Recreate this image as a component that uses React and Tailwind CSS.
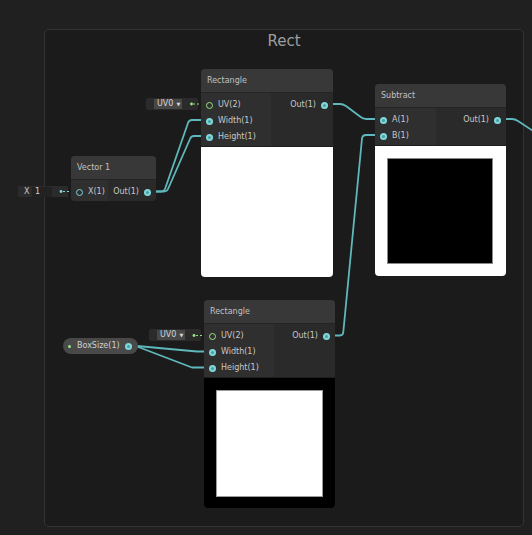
import React from 'react';

const font = { fontFamily: '"DejaVu Sans", Verdana, sans-serif' };

function PortDot({ hollow, green }) {
  if (hollow) {
    return (
      <span
        className={
          'w-[7px] h-[7px] rounded-full border-[1.5px] shrink-0 ' +
          (green ? 'border-[#96e383]' : 'border-[#7fd6d8]')
        }
      />
    );
  }
  return (
    <span className="w-[7px] h-[7px] rounded-full bg-[#80d8da] shrink-0 flex items-center justify-center">
      <span className="w-[3px] h-[3px] rounded-full bg-[#4a9ea1]" />
    </span>
  );
}

function Node({ x, y, w, inputW, title, inputs, outputs, preview, rows }) {
  return (
    <div
      className="absolute rounded-[4px] overflow-hidden bg-[#2a2a2a] flex flex-col"
      style={{ left: x, top: y, width: w }}
    >
      <div className="h-[24px] bg-[#383838] border-b border-[#242424] flex items-center pl-[6px] text-[8px] text-[#c2c2c2]">
        {title}
      </div>
      <div className="flex">
        <div className="bg-[#2f2f2f] pt-[4px] pb-[1px] flex flex-col" style={{ width: inputW }}>
          {inputs.map((p) => (
            <div key={p.label} className="h-[16px] flex items-center gap-[5px] pl-[5px] text-[8px] text-[#c8c8c8]">
              <PortDot hollow={p.hollow} green={p.green} />
              <span>{p.label}</span>
            </div>
          ))}
        </div>
        <div className="flex-1 bg-[#2a2a2a] pt-[4px] pb-[1px] flex flex-col items-end" style={{ minHeight: rows * 16 + 5 }}>
          {outputs.map((p) => (
            <div key={p.label} className="h-[16px] flex items-center gap-[5px] pr-[5px] text-[8px] text-[#c8c8c8]">
              <span>{p.label}</span>
              <PortDot />
            </div>
          ))}
        </div>
      </div>
      {preview}
    </div>
  );
}

function UvControl({ x, y }) {
  return (
    <div
      className="absolute h-[12px] w-[52px] bg-[#2b2b2b] rounded-[2px] flex items-center pl-[8px]"
      style={{ left: x, top: y }}
    >
      <div className="h-[10px] w-[28px] bg-[#474747] flex items-center gap-[3px] pl-[3px] text-[8px] leading-none text-[#d6d6d6]">
        <span>UV0</span>
        <span className="text-[5px]">▼</span>
      </div>
    </div>
  );
}

export default function App() {
  return (
    <div className="relative w-[532px] h-[535px] bg-[#202020] overflow-hidden" style={font}>
      {/* group */}
      <div className="absolute left-[44px] top-[29px] w-[480px] h-[498px] bg-[#1b1b1b] border border-[#333333] rounded-[5px] flex justify-center">
        <div className="pt-[1px] text-[15px] leading-[20px] text-[#9d9d9d]">Rect</div>
      </div>

      {/* inline controls */}
      <UvControl x={146} y={98} />
      <UvControl x={149} y={329} />
      <div className="absolute left-[18px] top-[186px] w-[50px] h-[11px] bg-[#2b2b2b] flex items-center text-[8px] text-[#c8c8c8]">
        <span className="pl-[6px] w-[14px]">X</span>
        <div className="h-[10px] w-[20px] bg-[#222222] flex items-center pl-[3px] text-[#d0d0d0]">1</div>
      </div>

      {/* edges */}
      <svg className="absolute inset-0 pointer-events-none" width="532" height="535">
        <g fill="none" stroke="#5fb8bb" strokeWidth="1.8" strokeLinejoin="round" strokeLinecap="round">
          <path d="M148 191.5 H161 Q164 191.5 165 189 L188 123 Q189 120 192 120 H209" />
          <path d="M148 191.5 H164 Q167 191.5 168 189 L190 139 Q191 136 194 136 H209" />
          <path d="M325 104 H340 Q343 104 346 106 L360 116.5 Q363 119 366 119 H383" />
          <path d="M328 335.5 H340 Q343 335.5 343.3 332 L362 138.5 Q362.5 135 366 135 H383" />
          <path d="M498 119 H512 Q515 119 518 121 L540 135.5" />
          <path d="M125 346 H137 L197 351.5 H212" />
          <path d="M125 346.5 H137 L192 367.5 H212" />
        </g>
        <g fill="none" strokeWidth="1" strokeDasharray="2 2">
          <path d="M193 104 H206" stroke="#8fdc7c" />
          <path d="M196 335.5 H209" stroke="#8fdc7c" />
          <path d="M63 191.5 H76" stroke="#7fd6d8" />
        </g>
        <circle cx="191.5" cy="104" r="1.4" fill="#9ae688" />
        <circle cx="194" cy="335.5" r="1.4" fill="#9ae688" />
        <circle cx="61" cy="191.5" r="1.4" fill="#80d8da" />
      </svg>

      {/* BoxSize property */}
      <div className="absolute left-[63px] top-[338px] w-[75px] h-[16px] rounded-full bg-[#494949] flex items-center pl-[5px] text-[8px] text-[#d0d0d0]">
        <span className="w-[3px] h-[3px] rounded-full bg-[#9ae688]" />
        <span className="ml-[6px]">BoxSize(1)</span>
        <span className="ml-[5px] flex"><PortDot /></span>
      </div>

      <Node
        x={71}
        y={156}
        w={85}
        inputW={37}
        title="Vector 1"
        rows={1}
        inputs={[{ label: 'X(1)', hollow: true }]}
        outputs={[{ label: 'Out(1)' }]}
      />

      <Node
        x={201}
        y={69}
        w={132}
        inputW={70}
        title="Rectangle"
        rows={3}
        inputs={[
          { label: 'UV(2)', hollow: true, green: true },
          { label: 'Width(1)' },
          { label: 'Height(1)' },
        ]}
        outputs={[{ label: 'Out(1)' }]}
        preview={<div className="h-[131px] bg-white border-t border-[#1e1e1e]" />}
      />

      <Node
        x={375}
        y={84}
        w={131}
        inputW={61}
        title="Subtract"
        rows={2}
        inputs={[{ label: 'A(1)' }, { label: 'B(1)' }]}
        outputs={[{ label: 'Out(1)' }]}
        preview={
          <div className="h-[131px] bg-white border-t border-[#1e1e1e] pl-[12px] pt-[12px]">
            <div className="w-[106px] h-[106px] bg-black border border-[#8a8a8a]" />
          </div>
        }
      />

      <Node
        x={204}
        y={300}
        w={131}
        inputW={70}
        title="Rectangle"
        rows={3}
        inputs={[
          { label: 'UV(2)', hollow: true, green: true },
          { label: 'Width(1)' },
          { label: 'Height(1)' },
        ]}
        outputs={[{ label: 'Out(1)' }]}
        preview={
          <div className="h-[131px] bg-black border-t border-[#1e1e1e] pl-[12px] pt-[12px]">
            <div className="w-[107px] h-[107px] bg-white border border-[#9a9a9a]" />
          </div>
        }
      />
    </div>
  );
}
